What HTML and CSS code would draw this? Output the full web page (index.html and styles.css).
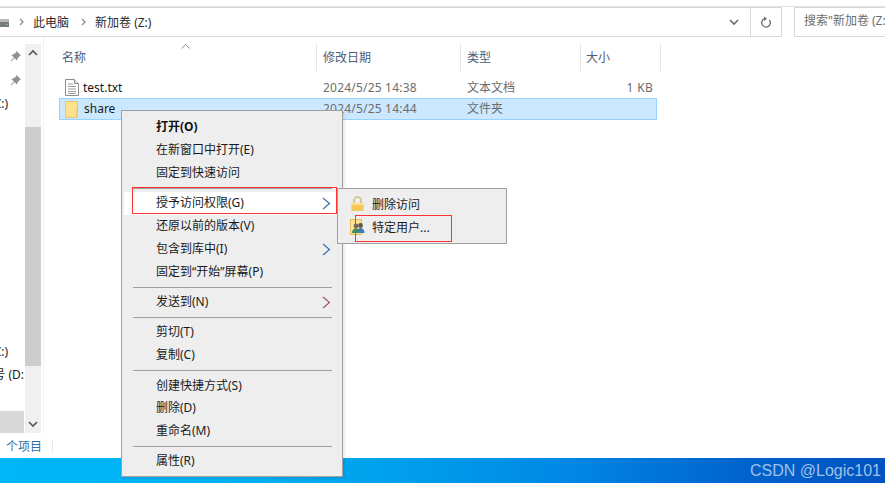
FILE: index.html
```html
<!DOCTYPE html>
<html lang="zh-CN">
<head>
<meta charset="utf-8">
<title>新加卷 (Z:)</title>
<link rel="stylesheet" href="styles.css">
</head>
<body>
<div class="window">
  <div class="top-line"></div>
  <header class="toolbar">
    <div class="address">
      <svg class="drive" width="9" height="8" viewBox="0 0 9 8"><rect y="0" width="9" height="3" fill="#b9b9b9"/><rect y="3" width="9" height="5" fill="#77797a"/><rect x="6" y="5" width="2" height="1" fill="#5fd35f"/></svg>
      <svg class="crumb-arrow" width="5" height="8" viewBox="0 0 5 8"><path d="M1 1l3 3-3 3" fill="none" stroke="#8a8a8a" stroke-width="1.3"/></svg>
      <span class="crumb">此电脑</span>
      <svg class="crumb-arrow" width="5" height="8" viewBox="0 0 5 8"><path d="M1 1l3 3-3 3" fill="none" stroke="#8a8a8a" stroke-width="1.3"/></svg>
      <span class="crumb">新加卷 (Z:)</span>
      <span class="spacer"></span>
      <span class="dropdown"><svg width="10" height="7" viewBox="0 0 10 7"><path d="M1 1l4 4 4-4" fill="none" stroke="#6b6b6b" stroke-width="1.6"/></svg></span>
      <span class="refresh"><svg width="12" height="13" viewBox="0 0 12 13"><path d="M5 2.6a4.3 4.3 0 1 1-3.2 2.6" fill="none" transform="rotate(60 6 7)" stroke="#6a6a6a" stroke-width="1.3"/><path d="M4 .5v4.4l3-2.2z" fill="#6a6a6a"/></svg></span>
    </div>
    <div class="search">搜索"新加卷 (Z:)"</div>
  </header>

  <main class="main">
    <aside class="sidebar">
      <div class="nav">
        <svg class="pin pin-first" width="13" height="13" viewBox="0 0 12 12"><path d="M7 1l4 4-1.2.5L7.8 8l-.4 1.8L5 7.4 2 10.5l-.5-.5 3-3L2.200 4.600 4 4.200 6.500 2.200z" fill="#8f8f8f"/></svg>
        <svg class="pin pin-second" width="13" height="13" viewBox="0 0 12 12"><path d="M7 1l4 4-1.2.5L7.8 8l-.4 1.800L5 7.400 2 10.500l-.5-.5 3-3L2.200 4.600 4 4.200 6.500 2.200z" fill="#8f8f8f"/></svg>
        <div class="nav-clip nav-a">新加卷 (Z:)</div>
        <div class="nav-clip nav-b">新加卷 (Z:)</div>
        <div class="nav-clip nav-c">卷号 (D:</div>
        <div class="nav-selected"></div>
      </div>
      <div class="scrollbar">
        <div class="scroll-btn"><svg width="10" height="7" viewBox="0 0 10 7"><path d="M1 6l4-4 4 4" fill="none" stroke="#555" stroke-width="1.6"/></svg></div>
        <div class="scroll-before"></div>
        <div class="scroll-thumb"></div>
        <div class="scroll-after"></div>
        <div class="scroll-btn"><svg width="10" height="7" viewBox="0 0 10 7"><path d="M1 1l4 4 4-4" fill="none" stroke="#555" stroke-width="1.6"/></svg></div>
      </div>
    </aside>

    <section class="files">
      <svg class="sort-caret" width="9" height="5" viewBox="0 0 9 5"><path d="M.5 4.500l4-4 4 4" fill="none" stroke="#8a8a8a"/></svg>
      <div class="heads">
        <div class="head head-name">名称</div>
        <div class="head head-date">修改日期</div>
        <div class="head head-type">类型</div>
        <div class="head head-size">大小</div>
      </div>
      <div class="row">
        <span class="cell-name">
          <svg class="file-icon" width="14" height="17" viewBox="0 0 14 17"><path d="M.5.500h9l4 4v12H.5z" fill="#fff" stroke="#8d8d8d"/><path d="M9.500.500v4h4" fill="#eee" stroke="#8d8d8d"/><path d="M3 5h5M3 7.500h8M3 10h8M3 12.500h8M3 14.500h8" stroke="#9b9b9b"/></svg>
          test.txt
        </span>
        <span class="cell-date">2024/5/25 14:38</span>
        <span class="cell-type">文本文档</span>
        <span class="cell-size">1 KB</span>
      </div>
      <div class="row row-selected">
        <span class="cell-name">
          <svg class="file-icon" width="14" height="17" viewBox="0 0 14 17"><path d="M.5.500h12v16H.5z" fill="#ffe08c" stroke="#e8c672"/><path d="M11 8v8.500h2V8z" fill="#f2cc6b"/></svg>
          <span class="share-name">share</span>
        </span>
        <span class="cell-date">2024/5/25 14:44</span>
        <span class="cell-type">文件夹</span>
        <span class="cell-size"></span>
      </div>
    </section>
  </main>

  <footer class="status"><span class="status-text">个项目</span><span class="status-sep"></span></footer>
  <div class="taskbar"><span class="watermark">CSDN @Logic101</span></div>
</div>

<nav class="menu">
  <div class="item item-bold">打开(O)</div>
  <div class="item">在新窗口中打开(E)</div>
  <div class="item">固定到快速访问</div>
  <div class="sep"></div>
  <div class="item item-active">授予访问权限(G)<svg class="sub-arrow" width="9" height="13" viewBox="0 0 9 13"><path d="M1 1l6.500 5.500L1 12" fill="none" stroke="#3c6fb0" stroke-width="1.200"/></svg></div>
  <div class="item">还原以前的版本(V)</div>
  <div class="item">包含到库中(I)<svg class="sub-arrow" width="9" height="13" viewBox="0 0 9 13"><path d="M1 1l6.500 5.500L1 12" fill="none" stroke="#3c6fb0" stroke-width="1.200"/></svg></div>
  <div class="item">固定到“开始”屏幕(P)</div>
  <div class="sep"></div>
  <div class="item">发送到(N)<svg class="sub-arrow" width="9" height="13" viewBox="0 0 9 13"><path d="M1 1l6.500 5.500L1 12" fill="none" stroke="#a0566a" stroke-width="1.200"/></svg></div>
  <div class="sep"></div>
  <div class="item">剪切(T)</div>
  <div class="item">复制(C)</div>
  <div class="sep sep-tall"></div>
  <div class="item">创建快捷方式(S)</div>
  <div class="item">删除(D)</div>
  <div class="item">重命名(M)</div>
  <div class="sep"></div>
  <div class="item">属性(R)</div>
</nav>

<nav class="submenu">
  <div class="sub-item">
    <svg class="sub-icon" width="14" height="16" viewBox="0 0 14 16"><path d="M3.500 7V4.500a3.500 3.500 0 0 1 7 0V7" fill="none" stroke="#c9c08a" stroke-width="1.600"/><rect x="1" y="7" width="12" height="8" fill="#f6c85a"/><rect x="1" y="7" width="12" height="2" fill="#ffe08c"/></svg>
    删除访问
  </div>
  <div class="sub-item">
    <svg class="sub-icon" width="15" height="16" viewBox="0 0 15 16"><rect x=".5" y=".5" width="11" height="15" fill="#ffe08c" stroke="#e2bf60"/><circle cx="6" cy="7" r="2.400" fill="#6f6a5e"/><path d="M2 14c0-3 1.500-4.500 4-4.500S10 11 10 14z" fill="#3f8a5a"/><circle cx="10.500" cy="6.500" r="2.400" fill="#5e5a50"/><path d="M7 14c0-3.500 1.500-5 3.500-5s4 1.500 4 5z" fill="#3f7fb0"/></svg>
    特定用户...
  </div>
</nav>

<div class="mark mark-main"></div>
<div class="mark mark-sub"></div>
</body>
</html>
```
FILE: styles.css
```css
* { box-sizing: border-box; }

html, body {
  margin: 0;
  width: 885px;
  height: 483px;
  overflow: hidden;
  background: #fff;
  font-family: "Noto Sans", "Noto Sans CJK SC", sans-serif;
  font-size: 12px;
  color: #1a1a1a;
}

.window {
  display: flex;
  flex-direction: column;
  height: 483px;
}

.top-line {
  height: 7px;
  border-bottom: 1px solid #e3e3e3;
  flex: none;
}

.toolbar {
  display: flex;
  gap: 12px;
  height: 30px;
  flex: none;
}

.address {
  width: 782px;
  height: 30px;
  display: flex;
  align-items: center;
  border: 1px solid #d9d9d9;
  border-left: 0;
  font-size: 12px;
}

.drive { margin-right: 10px; margin-top: 1px; }
.crumb { margin: 0 12px 0 9px; color: #2b2b2b; }
.crumb-arrow { flex: none; }
.spacer { flex: 1; }

.dropdown {
  width: 32px;
  height: 28px;
  display: flex;
  align-items: center;
  justify-content: center;
}

.refresh {
  width: 31px;
  height: 28px;
  display: flex;
  align-items: center;
  justify-content: center;
  border-left: 1px solid #d9d9d9;
}

.search {
  flex: 1;
  height: 30px;
  border: 1px solid #d9d9d9;
  border-right: 0;
  padding-left: 9px;
  line-height: 26px;
  color: #6d6d6d;
  white-space: nowrap;
  overflow: hidden;
}

.main {
  flex: 1;
  display: flex;
  min-height: 0;
}

.sidebar {
  width: 44px;
  flex: none;
  display: flex;
  border-right: 1px solid #f2f2f2;
  padding-top: 7px;
  padding-right: 2px;
}

.nav {
  width: 25px;
  position: relative;
  overflow: hidden;
}

.pin { position: absolute; left: 9px; }
.pin-first { top: 6px; }
.pin-second { top: 30px; }

.nav-clip {
  position: absolute;
  white-space: nowrap;
  line-height: 18px;
}

.nav-a { top: 51px; right: 17px; }
.nav-b { top: 299px; right: 17px; }
.nav-c { top: 322px; right: 1px; }

.nav-selected {
  position: absolute;
  left: 0;
  right: 1px;
  bottom: 0;
  height: 22px;
  background: #d9d9d9;
}

.scrollbar {
  width: 16px;
  flex: none;
  display: flex;
  flex-direction: column;
  background: #f0f0f0;
}

.scroll-btn {
  height: 17px;
  flex: none;
  display: flex;
  align-items: center;
  justify-content: center;
}

.scroll-before { height: 66px; flex: none; }
.scroll-thumb { height: 239px; flex: none; background: #cdcdcd; }
.scroll-after { flex: 1; }

.files {
  flex: 1;
  position: relative;
  padding: 7px 0 0 15px;
}

.sort-caret {
  position: absolute;
  left: 137px;
  top: 7px;
}

.heads {
  display: grid;
  grid-template-columns: 258px 144px 120px 80px;
  height: 27px;
  margin-bottom: 5px;
}

.head {
  padding-left: 3px;
  line-height: 28px;
  color: #4c607a;
  border-right: 1px solid #e5e5e5;
  white-space: nowrap;
  overflow: hidden;
}

.head-date, .head-type { padding-left: 6px; }
.head-size { padding-left: 5px; }

.row {
  display: grid;
  grid-template-columns: 257px 144px 120px 72px;
  height: 22px;
  padding-top: 1px;
  align-items: center;
  width: 598px;
  color: #6d6d6d;
  border: 1px solid transparent;
  line-height: 18px;
}

.row-selected {
  background: #cce8ff;
  border-color: #99d1ff;
  padding-top: 0;
}

.cell-name {
  display: flex;
  align-items: center;
  gap: 4px;
  padding-left: 5px;
  color: #1a1a1a;
}

.share-name { margin-left: 1px; }
.cell-date { padding-left: 6px; letter-spacing: .2px; }
.cell-type { padding-left: 6px; }
.cell-size { text-align: right; letter-spacing: .3px; }

.status {
  height: 25px;
  flex: none;
  display: flex;
  align-items: center;
  color: #2f6fa8;
  padding-left: 6px;
}

.status-text { width: 46px; flex: none; }
.status-sep { width: 1px; height: 14px; background: #e8e8e8; }

.taskbar {
  height: 25px;
  flex: none;
  display: flex;
  justify-content: flex-end;
  align-items: center;
  padding-right: 4px;
  background: linear-gradient(90deg, #00b6f7 0%, #00b0f2 30%, #008be6 62%, #0062cc 85%, #0052c0 100%);
}

.watermark {
  font-family: "Liberation Sans", sans-serif;
  font-size: 16px;
  line-height: 20px;
  color: #9fc2e6;
  white-space: nowrap;
}

.menu {
  position: absolute;
  left: 121px;
  top: 110px;
  width: 222px;
  height: 367px;
  padding: 5px 2px;
  background: #eeeeee;
  border: 1px solid #a0a0a0;
  box-shadow: 2px 2px 2px rgba(0, 0, 0, .08);
}

.item {
  height: 22.75px;
  line-height: 22.5px;
  padding-left: 32px;
  position: relative;
  color: #1a1a1a;
  white-space: nowrap;
}

.item-bold { font-weight: 700; color: #111; }
.item-active { background: #fff; margin-bottom: .5px; }

.sub-arrow {
  position: absolute;
  right: 9px;
  top: 5px;
}

.sep {
  height: 1px;
  background: #a0a0a0;
  margin: 3.25px 8px 3.25px 9px;
}

.sep-tall { margin-bottom: 3.75px; }

.submenu {
  position: absolute;
  left: 337px;
  top: 188px;
  width: 170px;
  height: 56px;
  padding: 4px 2px;
  background: #eeeeee;
  border: 1px solid #a0a0a0;
}

.sub-item {
  height: 22.5px;
  display: flex;
  align-items: center;
  gap: 7px;
  padding-left: 10px;
  white-space: nowrap;
}

.sub-icon { flex: none; width: 15px; }

.mark {
  position: absolute;
  border: 1px solid #f33;
  pointer-events: none;
}

.mark-main { left: 132px; top: 187px; width: 205px; height: 27px; }
.mark-sub { left: 355px; top: 215px; width: 97px; height: 27px; }
```
